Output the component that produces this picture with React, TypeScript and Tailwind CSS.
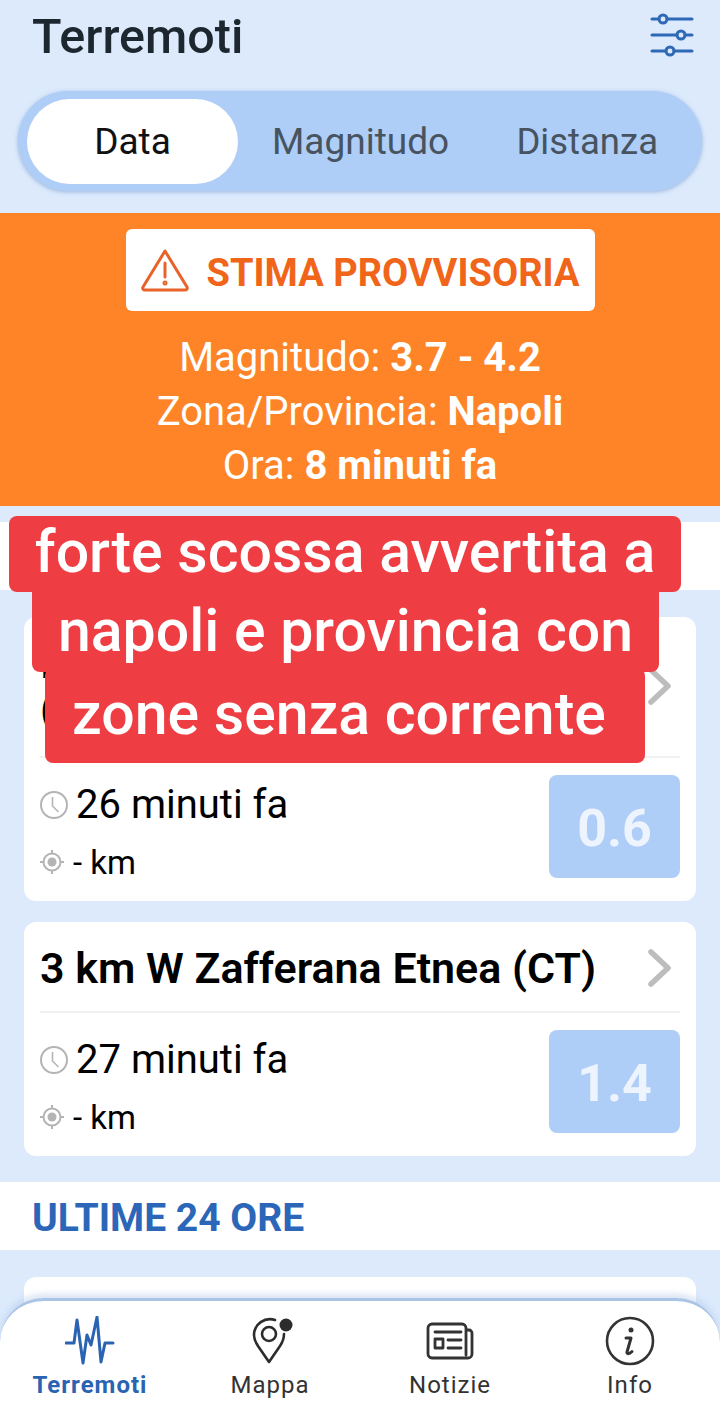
import React from "react";

const font = "font-['Roboto',sans-serif]";

function ClockIcon() {
  return (
    <svg width="30" height="30" viewBox="0 0 30 30" fill="none" stroke="#b4b4b4" strokeWidth="2" className="-ml-[1px] shrink-0">
      <circle cx="15" cy="15" r="13" />
      <path d="M13.5 7v9l6 6" strokeWidth="1.6" />
    </svg>
  );
}

function TargetIcon() {
  return (
    <svg width="26" height="26" viewBox="0 0 26 26" fill="none" stroke="#b4b4b4" strokeWidth="2" className="-ml-[1px] shrink-0">
      <circle cx="13" cy="13" r="8.5" />
      <circle cx="13" cy="13" r="4.5" fill="#b4b4b4" stroke="none" />
      <path d="M13 1v3.5M13 21.5V25M1 13h3.5M21.5 13H25" />
    </svg>
  );
}

function Chevron() {
  return (
    <svg width="26" height="38" viewBox="0 0 26 38" fill="none" stroke="#bdbdbd" strokeWidth="5.5" strokeLinecap="round" strokeLinejoin="round">
      <path d="M4 3l17 16L4 35" />
    </svg>
  );
}

function QuakeCard({ title, time, mag, className, headClass }: { title: React.ReactNode; time: string; mag: string; className: string; headClass: string }) {
  return (
    <div className={`mx-6 rounded-xl bg-white pl-4 pr-4 ${className}`}>
      <div className={`flex items-center justify-between border-b-2 border-[#f1f1f1] pr-[7px] pt-[23px] ${headClass}`}>
        <div className="whitespace-nowrap text-[43px] font-semibold leading-[46px] text-black">{title}</div>
        <Chevron />
      </div>
      <div className="flex items-start justify-between pt-[17px]">
        <div className="text-black">
          <div className="flex h-[60px] items-center gap-[7px]">
            <ClockIcon />
            <span className="text-[40px] leading-none">{time}</span>
          </div>
          <div className="mt-[4px] flex h-[46px] items-center gap-[8px]">
            <TargetIcon />
            <span className="text-[33px] leading-none">- km</span>
          </div>
        </div>
        <div className="flex h-[103px] w-[131px] items-center justify-center rounded-lg bg-[#aecdf7] pt-[4px] text-[52px] font-bold text-[#eef4fd]">
          {mag}
        </div>
      </div>
    </div>
  );
}

function NavItem({ icon, label, active }: { icon: React.ReactNode; label: string; active?: boolean }) {
  return (
    <div className="flex w-[180px] flex-col items-center">
      <div className="flex h-[50px] items-center justify-center">{icon}</div>
      <span className={`mt-[4px] text-[24px] leading-[30px] tracking-[1px] ${active ? "font-bold text-[#2b63b3]" : "text-[#333]"}`}>{label}</span>
    </div>
  );
}

export default function App() {
  return (
    <div className={`${font} relative h-[1412px] w-[720px] overflow-hidden bg-[#dceafc]`}>
      {/* header */}
      <div className="flex h-[91px] items-start justify-between pl-[32px] pr-[26px]">
        <h1 className="mt-[10px] text-[48.5px] font-medium leading-[54px] text-[#1c2730]">Terremoti</h1>
        <svg width="44" height="44" viewBox="0 0 44 44" fill="none" stroke="#2f68b5" strokeWidth="3" strokeLinecap="round" className="mt-[13px]">
          <path d="M2 6h7M17 6h25M2 22h25M35 22h7M2 38h14M24 38h18" />
          <circle cx="13" cy="6" r="4" />
          <circle cx="31" cy="22" r="4" />
          <circle cx="20" cy="38" r="4" />
        </svg>
      </div>

      {/* sort tabs */}
      <div className="mx-[18px] flex h-[100px] items-center rounded-[50px] bg-[#aecdf7] pl-[9px] pr-[44px] shadow-[0_1px_4px_rgba(90,130,190,0.5)]">
        <div className="flex h-[85px] w-[211px] items-center justify-center rounded-[43px] bg-white pt-[2px] text-[37px] text-[#111]">Data</div>
        <div className="ml-[34px] pt-[2px] text-[37px] text-[#47535f]">Magnitudo</div>
        <div className="ml-auto pt-[2px] text-[36.5px] text-[#47535f]">Distanza</div>
      </div>

      {/* provisional estimate */}
      <div className="mt-[22px] flex h-[293px] flex-col items-center bg-[#fe8427] pt-4 text-white">
        <div className="flex h-[82px] w-[469px] items-center justify-center gap-[18px] rounded-md bg-white text-[38px] font-bold text-[#f0651a]">
          <svg width="48" height="44" viewBox="0 0 48 44" fill="none" stroke="#e8622a" strokeWidth="3" strokeLinejoin="round" strokeLinecap="round">
            <path d="M24 3L2 39a2 2 0 0 0 2 3h40a2 2 0 0 0 2-3z" />
            <path d="M24 15v14" />
            <circle cx="24" cy="35" r="1" />
          </svg>
          <span className="pt-[6px]">STIMA PROVVISORIA</span>
        </div>
        <div className="mt-[20px] text-center text-[40px] leading-[54px]">
          <div>Magnitudo: <b>3.7 - 4.2</b></div>
          <div>Zona/Provincia: <b>Napoli</b></div>
          <div>Ora: <b>8 minuti fa</b></div>
        </div>
      </div>

      {/* list */}
      <div className="mt-4 h-[68px] bg-white" />
      <QuakeCard
        className="mt-[27px] h-[284px]"
        headClass="pb-[24px]"
        title={<>I<br />(</>}
        time="26 minuti fa"
        mag="0.6"
      />
      <QuakeCard
        className="mt-[21px] h-[234px]"
        headClass="pb-[20px]"
        title="3 km W Zafferana Etnea (CT)"
        time="27 minuti fa"
        mag="1.4"
      />
      <div className="mt-[26px] flex h-[68px] items-center bg-white pl-[32px] pt-[5px] text-[39px] font-bold text-[#2b66b8]">ULTIME 24 ORE</div>
      <div className="mx-6 mt-[27px] h-[40px] rounded-xl bg-white" />

      {/* video caption */}
      <div className="absolute left-[9px] top-[516px] z-10 flex h-[76px] w-[672px] items-center justify-center rounded-lg bg-[#ee3e43] pb-[3px] text-[59px] font-medium text-white">
        forte scossa avvertita a
      </div>
      <div className="absolute left-[32px] top-[590px] z-10 flex h-[82px] w-[627px] items-center justify-center rounded-b-lg bg-[#ee3e43] text-[59px] font-medium text-white">
        napoli e provincia con
      </div>
      <div className="absolute left-[45px] top-[668px] z-10 flex h-[95px] w-[600px] items-center justify-center rounded-lg bg-[#ee3e43] pb-[3px] pr-[12px] text-[59px] font-medium text-white">
        zone senza corrente
      </div>

      {/* bottom nav */}
      <div className="absolute bottom-0 left-0 right-0 z-20 flex h-[114px] items-start rounded-t-[44px] border-t-[3px] border-[#aac4e6] bg-white pt-[15px] shadow-[0_-4px_6px_rgba(170,196,230,0.45)]">
        <NavItem
          active
          label="Terremoti"
          icon={
            <svg width="50" height="50" viewBox="0 0 50 50" fill="none" stroke="#2b63b3" strokeWidth="3" strokeLinejoin="round" strokeLinecap="round">
              <path d="M1 27h8l3-23 6 43 4-28 4 10 6-28 4 45 4-19h8" />
            </svg>
          }
        />
        <NavItem
          label="Mappa"
          icon={
            <svg width="50" height="50" viewBox="0 0 50 50" fill="none" stroke="#2c2c2c" strokeWidth="2.6" strokeLinejoin="round" strokeLinecap="round">
              <path d="M30 4a16 16 0 0 0-21 15c0 4 2 8 4 11l11 16 11-16c2-3 4-7 4-12" />
              <circle cx="24" cy="18" r="7" />
              <circle cx="41" cy="9" r="6.5" fill="#2c2c2c" stroke="none" />
            </svg>
          }
        />
        <NavItem
          label="Notizie"
          icon={
            <svg width="48" height="38" viewBox="0 0 48 38" fill="none" stroke="#333" strokeWidth="2.8" strokeLinecap="round" strokeLinejoin="round">
              <path d="M40 8h3a3 3 0 0 1 3 3v21a4 4 0 0 1-4 4H6a4 4 0 0 1-4-4V6a4 4 0 0 1 4-4h30a4 4 0 0 1 4 4v27" />
              <path d="M9 10h26M22 18h13M22 26h13" />
              <rect x="9" y="17" width="8" height="9" />
            </svg>
          }
        />
        <NavItem
          label="Info"
          icon={
            <svg width="50" height="50" viewBox="0 0 50 50" fill="none" stroke="#333" strokeWidth="2.6" strokeLinecap="round" strokeLinejoin="round">
              <circle cx="25" cy="25" r="23" />
              <circle cx="26" cy="14" r="2.5" fill="#333" stroke="none" />
              <path d="M21 22h5l-4 14c-.5 2 2 2.5 5-.5" strokeWidth="3" />
            </svg>
          }
        />
      </div>
    </div>
  );
}
